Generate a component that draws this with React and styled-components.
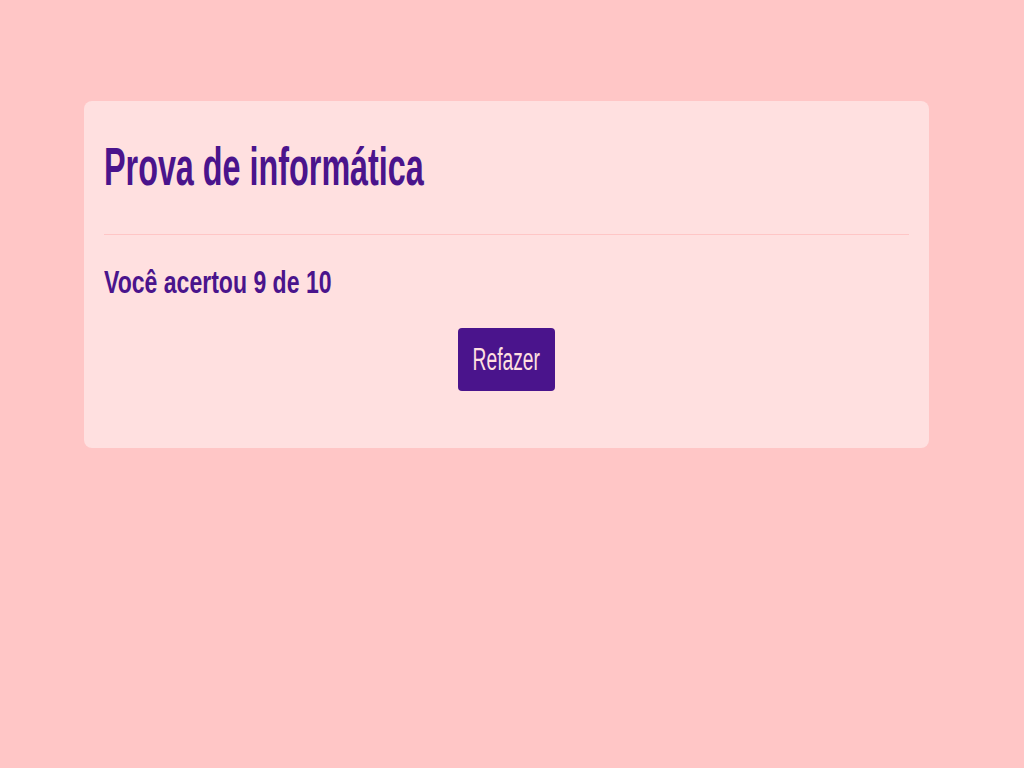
import React from "react";
import styled, { createGlobalStyle } from "styled-components";

const GlobalStyle = createGlobalStyle`
  body {
    margin: 0;
    background-color: #ffc6c6;
    font-family: "Liberation Sans", Arial, sans-serif;
  }
`;

const Page = styled.div`
  min-height: 768px;
  padding: 101px 95px 0 84px;
  box-sizing: border-box;
`;

const Card = styled.div`
  background-color: #ffe0e0;
  border-radius: 8px;
  padding: 35px 20px 57px;
  display: flex;
  flex-direction: column;
`;

// condensed look of the headings
const Title = styled.h1`
  margin: 0;
  font-size: 53px;
  font-weight: 700;
  line-height: 62px;
  color: #4a148c;
  white-space: nowrap;
  transform: scaleX(0.61);
  transform-origin: left center;
`;

const Divider = styled.hr`
  margin: 36px 0 29px;
  border: none;
  border-top: 1px solid #ffc6c6;
`;

const Score = styled.h2`
  margin: 0 0 28px;
  font-size: 32px;
  font-weight: 700;
  line-height: 36px;
  color: #4a148c;
  white-space: nowrap;
  transform: scaleX(0.72);
  transform-origin: left center;
`;

const Button = styled.button`
  align-self: center;
  width: 97px;
  height: 63px;
  padding: 0;
  border: none;
  border-radius: 4px;
  background-color: #4a148c;
  color: #ffe0e0;
  font-family: inherit;
  font-size: 31px;
  cursor: pointer;
  display: flex;
  align-items: center;
  justify-content: center;
`;

const ButtonLabel = styled.span`
  display: inline-block;
  white-space: nowrap;
  transform: scaleX(0.62);
`;

const App = () => {
  return (
    <>
      <GlobalStyle />
      <Page>
        <Card>
          <Title>Prova de informática</Title>
          <Divider />
          <Score>Você acertou 9 de 10</Score>
          <Button>
            <ButtonLabel>Refazer</ButtonLabel>
          </Button>
        </Card>
      </Page>
    </>
  );
};

export default App;
